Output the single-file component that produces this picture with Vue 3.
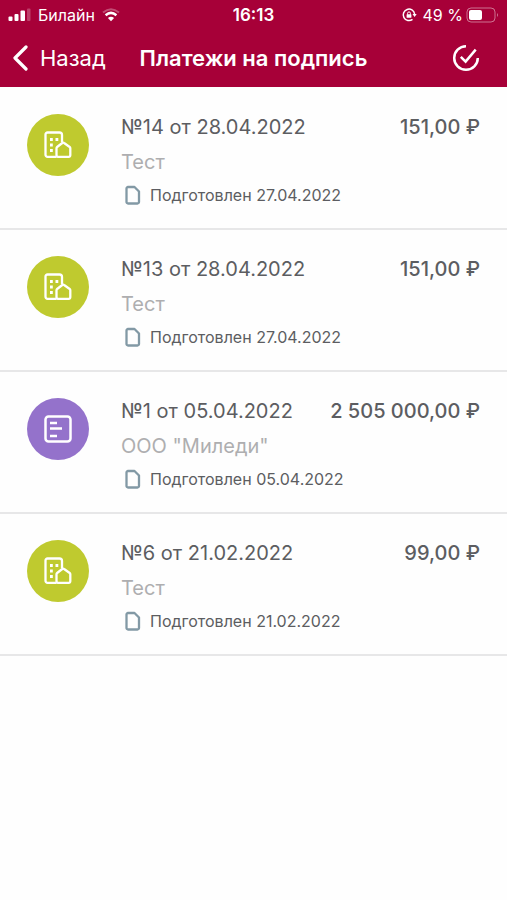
<script setup>
const payments = [
  { id: 14, title: '№14 от 28.04.2022', amount: '151,00 ₽', payee: 'Тест', status: 'Подготовлен 27.04.2022', kind: 'company' },
  { id: 13, title: '№13 от 28.04.2022', amount: '151,00 ₽', payee: 'Тест', status: 'Подготовлен 27.04.2022', kind: 'company' },
  { id: 1, title: '№1 от 05.04.2022', amount: '2 505 000,00 ₽', payee: 'ООО "Миледи"', status: 'Подготовлен 05.04.2022', kind: 'budget' },
  { id: 6, title: '№6 от 21.02.2022', amount: '99,00 ₽', payee: 'Тест', status: 'Подготовлен 21.02.2022', kind: 'company' },
]
</script>

<template>
  <div class="screen">
    <header class="header">
      <div class="status-bar">
        <div class="status-side">
          <svg class="signal" width="24" height="14" viewBox="0 0 24 14" aria-hidden="true">
            <rect x="0.500" y="8.500" width="4" height="4.500" rx="1" />
            <rect x="6.500" y="6" width="4" height="7" rx="1" />
            <rect x="12.500" y="2.500" width="4.500" height="10.500" rx="1" />
            <rect x="19" y="0.500" width="3.500" height="12.500" rx="1" opacity=".25" />
          </svg>
          <span class="carrier">Билайн</span>
          <svg class="wifi" width="20" height="16" viewBox="0 0 20 16" fill="none" aria-hidden="true">
            <path d="M2 5.600Q10-1 18 5.600" stroke="#fff" stroke-width="2" opacity=".3" />
            <path d="M4.600 8.200Q10 3.600 15.400 8.200" stroke="#fff" stroke-width="2.500" />
            <path d="M6.900 11.100Q10 8.400 13.100 11.100L10 14.300z" fill="#fff" />
          </svg>
        </div>
        <span class="clock">16:13</span>
        <div class="status-side end">
          <svg class="lock" width="16" height="16" viewBox="0 0 16 16" fill="none" stroke="#fff" aria-hidden="true">
            <path d="M11.500 12.300A5.700 5.700 0 1 1 13.600 7" stroke-width="1.500" />
            <path d="M11.500 7h4.200l-2.100 3z" fill="#fff" stroke="none" />
            <path d="M6.600 7.600V6.300a1.400 1.400 0 0 1 2.800 0v1.300" stroke-width="1" />
            <rect x="5.600" y="7.200" width="4.800" height="3.600" rx=".6" fill="#fff" stroke="none" />
          </svg>
          <span class="percent">49 %</span>
          <svg width="33" height="16" viewBox="0 0 33 16" aria-hidden="true">
            <rect x="1" y="1" width="28" height="14" rx="4" fill="none" stroke="#fff" stroke-opacity=".45" />
            <rect x="3" y="3" width="13" height="10" rx="2" fill="#fff" />
            <path d="M31 6q2 2 0 4z" fill="#fff" opacity=".45" />
          </svg>
        </div>
      </div>
      <nav class="nav-bar">
        <button class="back" type="button">
          <svg width="16" height="26" viewBox="0 0 16 26" fill="none" aria-hidden="true">
            <path d="M14 2L3 13l11 11" stroke="#fff" stroke-width="3.200" stroke-linecap="round" stroke-linejoin="round" />
          </svg>
          <span>Назад</span>
        </button>
        <h1 class="title">Платежи на подпись</h1>
        <button class="select" type="button" aria-label="Выбрать">
          <svg width="28" height="28" viewBox="0 0 28 28" fill="none" stroke="#fff" stroke-width="2.500" aria-hidden="true">
            <path d="M14 2.200A11.800 11.800 0 1 0 25.800 14" />
            <path d="M8.800 12.800l4.800 4.800L23.700 5.600" />
          </svg>
        </button>
      </nav>
    </header>

    <main>
      <ul class="list">
        <li v-for="p in payments" :key="p.id" class="payment">
          <div class="badge" :class="p.kind">
            <svg v-if="p.kind === 'company'" width="30" height="30" viewBox="0 0 30 30" fill="none" stroke="#fff" stroke-width="2.300" stroke-linejoin="round" aria-hidden="true">
              <path d="M13.500 26.800H4.500a2 2 0 0 1-2-2V4.500a2 2 0 0 1 2-2h12a2.500 2.500 0 0 1 2.500 2.500v7" />
              <path d="M15 26.800a1.500 1.500 0 0 1-1.500-1.500V18.200a1.500 1.500 0 0 1 .6-1.200l5.200-4a1.500 1.500 0 0 1 1.800 0l5.600 4a1.500 1.500 0 0 1 .6 1.200v7.100a1.500 1.500 0 0 1-1.500 1.500z" />
              <path d="M7 9.500h2.800M12.500 9.500h2.800M7 15h2.800M7 20.500h2.800" stroke-width="2.800" />
            </svg>
            <svg v-else width="30" height="30" viewBox="0 0 30 30" fill="none" stroke="#fff" stroke-width="2.500" aria-hidden="true">
              <rect x="2.500" y="2.500" width="25" height="25" rx="3" />
              <path d="M7 9h7M7 14.500h12M7 22h7" />
            </svg>
          </div>
          <div class="details">
            <div class="heading">
              <span>{{ p.title }}</span>
              <span class="amount">{{ p.amount }}</span>
            </div>
            <div class="payee">{{ p.payee }}</div>
            <div class="state">
              <svg width="16" height="20" viewBox="0 0 16 20" fill="none" stroke="#8299a5" stroke-width="2.300" stroke-linejoin="round" aria-hidden="true">
                <path d="M3 2h6.500L14 6.500V17a1.500 1.500 0 0 1-1.500 1.500H3A1.500 1.500 0 0 1 1.500 17V3.500A1.500 1.500 0 0 1 3 2z" />
              </svg>
              <span>{{ p.status }}</span>
            </div>
          </div>
        </li>
      </ul>
    </main>
  </div>
</template>

<style>
body {
  background: #fefefe;
}
</style>

<style scoped>
.screen {
  font-family: Inter, "Liberation Sans", sans-serif;
  color: #5c5d61;
}

.header {
  background: #a70038;
  color: #fff;
}

.status-bar {
  display: grid;
  grid-template-columns: 1fr auto 1fr;
  align-items: center;
  height: 30px;
  padding: 0 8px;
  font-size: 16px;
}

.status-side {
  display: flex;
  align-items: center;
  gap: 6px;
}

.signal {
  fill: #fff;
}

.end {
  justify-content: flex-end;
  gap: 3px;
}

.lock {
  margin-right: 3px;
}

.clock {
  font-size: 17px;
  font-weight: 600;
}

.percent {
  white-space: nowrap;
}

.nav-bar {
  display: grid;
  grid-template-columns: 1fr auto 1fr;
  align-items: center;
  height: 55px;
  padding: 0 12px 2px;
}

.back,
.select {
  display: flex;
  align-items: center;
  padding: 0;
  border: 0;
  background: none;
  color: #fff;
  font: inherit;
  cursor: pointer;
}

.back {
  gap: 12px;
  justify-self: start;
  font-size: 22px;
}

.select {
  justify-self: end;
  margin-right: 15px;
}

.title {
  margin: 0;
  font-size: 22px;
  font-weight: 600;
  white-space: nowrap;
}

.list {
  margin: 0;
  padding: 1px 0 0;
  list-style: none;
}

.payment {
  display: flex;
  align-items: flex-start;
  gap: 32px;
  padding: 25px 27px 21px;
  border-bottom: 2px solid #e7e7e8;
}

.badge {
  display: flex;
  flex: none;
  align-items: center;
  justify-content: center;
  width: 62px;
  height: 62px;
  margin-top: 1px;
  border-radius: 50%;
}

.company {
  background: #bfca2f;
}

.budget {
  background: #9472cb;
}

.details {
  display: grid;
  flex: 1;
  gap: 7px;
  min-width: 0;
}

.heading {
  display: flex;
  justify-content: space-between;
  gap: 12px;
  font-size: 20px;
  line-height: 28px;
}

.amount {
  font-weight: 500;
  white-space: nowrap;
}

.payee {
  color: #aeaeb0;
  font-size: 20px;
  line-height: 28px;
}

.state {
  display: flex;
  align-items: center;
  gap: 9px;
  padding-left: 4px;
  font-size: 16px;
  line-height: 24px;
}
</style>
